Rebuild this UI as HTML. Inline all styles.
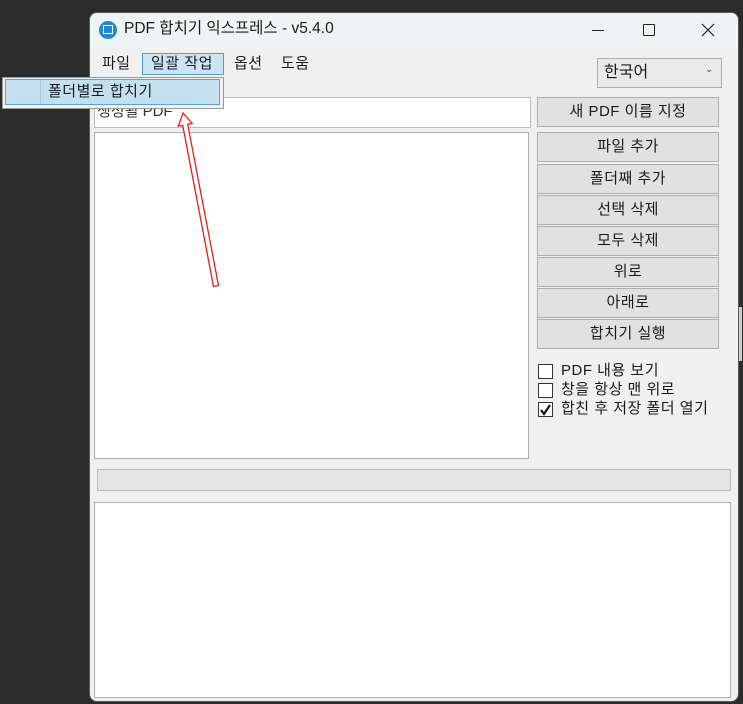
<!DOCTYPE html>
<html><head><meta charset="utf-8"><style>
*{margin:0;padding:0;box-sizing:border-box}
body{width:743px;height:704px;background:#2b2b2b;position:relative;overflow:hidden;font-family:"Liberation Sans","Noto Sans CJK KR",sans-serif;font-size:15px;color:#1a1a1a}
.a{position:absolute}
.win{left:89px;top:12px;width:650px;height:690px;background:#f0f0f0;border-radius:8px;overflow:hidden;border:1px solid #5a5a5a}
.title{left:0;top:0;width:650px;height:36px;background:#eef4f4}
.btn{position:absolute;left:537px;width:182px;height:30px;background:#e1e1e1;border:1px solid #adadad;text-align:center;line-height:28px;font-size:15px;letter-spacing:0.5px}
.cb{position:absolute;left:538px;width:15px;height:15px;border:1px solid #333;background:#fff}
.cbl{position:absolute;left:561px;font-size:15px;line-height:17px;letter-spacing:0.5px}
</style></head><body>
<div class="a win">
 <div class="a title"></div>
</div>
<div class="a" style="left:739px;top:307px;width:3px;height:54px;background:#ccc"></div>
<div class="a" style="left:99px;top:21px;width:18px;height:18px;border-radius:50%;background:#1e88d4"></div>
<div class="a" style="left:103px;top:25px;width:10px;height:9px;border:1.5px solid #fff"></div>
<div class="a" style="left:124px;top:19px;font-size:15.5px;line-height:20px">PDF 합치기 익스프레스 - v5.4.0</div>
<div class="a" style="left:592px;top:30px;width:12px;height:1px;background:#222"></div>
<div class="a" style="left:643px;top:24px;width:12px;height:12px;border:1.3px solid #222;border-radius:1px"></div>
<svg class="a" style="left:701px;top:23px" width="14" height="14"><path d="M1 1 L13 13 M13 1 L1 13" stroke="#222" stroke-width="1.2"/></svg>
<div class="a" style="left:102px;top:54px;line-height:20px;letter-spacing:0.5px">파일</div>
<div class="a" style="left:142px;top:53px;width:82px;height:22px;background:#cce4f7;border:1px solid #4a9fd4"></div>
<div class="a" style="left:151px;top:54px;line-height:20px;letter-spacing:0.5px">일괄 작업</div>
<div class="a" style="left:234px;top:54px;line-height:20px;letter-spacing:0.5px">옵션</div>
<div class="a" style="left:281px;top:54px;line-height:20px;letter-spacing:0.5px">도움</div>
<div class="a" style="left:597px;top:58px;width:125px;height:30px;background:#e9e9e9;border:1px solid #adadad"></div>
<div class="a" style="left:604px;top:63px;font-size:16px;line-height:20px">한국어</div>
<div class="a" style="left:705px;top:64px;font-size:10px;color:#555">⌄</div>
<div class="a" style="left:94px;top:97px;width:437px;height:31px;background:#fff;border:1px solid #bbb"></div>
<div class="a" style="left:97px;top:103px;line-height:17px;color:#333">생성될 PDF</div>
<div class="a" style="left:94px;top:132px;width:435px;height:327px;background:#fff;border:1px solid #adadad"></div>
<div class="a" style="left:2px;top:77px;width:222px;height:32px;background:#f2f2f2;border:1px solid #999"></div>
<div class="a" style="left:5px;top:79px;width:215px;height:26px;background:#c4e0ef;border:1.5px solid #4fa8dc"></div>
<div class="a" style="left:40px;top:80px;width:1px;height:24px;background:#a9c9da"></div>
<div class="a" style="left:48px;top:82px;line-height:20px;letter-spacing:0.5px">폴더별로 합치기</div>
<div class="btn" style="top:97px">새 PDF 이름 지정</div>
<div class="btn" style="top:132px">파일 추가</div>
<div class="btn" style="top:164px">폴더째 추가</div>
<div class="btn" style="top:195px">선택 삭제</div>
<div class="btn" style="top:226px">모두 삭제</div>
<div class="btn" style="top:257px">위로</div>
<div class="btn" style="top:288px">아래로</div>
<div class="btn" style="top:319px">합치기 실행</div>
<div class="cb" style="top:364px"></div><div class="cbl" style="top:362px">PDF 내용 보기</div>
<div class="cb" style="top:383px"></div><div class="cbl" style="top:381px">창을 항상 맨 위로</div>
<div class="cb" style="top:402px"></div><div class="cbl" style="top:400px">합친 후 저장 폴더 열기</div>
<svg class="a" style="left:538px;top:402px" width="15" height="15"><path d="M3 8 L6 12 L12 3" stroke="#111" stroke-width="2.2" fill="none"/></svg>
<div class="a" style="left:97px;top:469px;width:634px;height:22px;background:#e4e4e4;border:1px solid #bcbcbc"></div>
<div class="a" style="left:94px;top:502px;width:637px;height:196px;background:#fff;border:1px solid #adadad"></div>
<svg class="a" style="left:0;top:0" width="743" height="704">
<polygon points="213.5,286.5 182.7,125.3 178.3,126.1 183,113 192.1,123.5 187.7,124.3 218.5,285.5" fill="#fff" stroke="#e02020" stroke-width="1.3"/>
</svg>
</body></html>
